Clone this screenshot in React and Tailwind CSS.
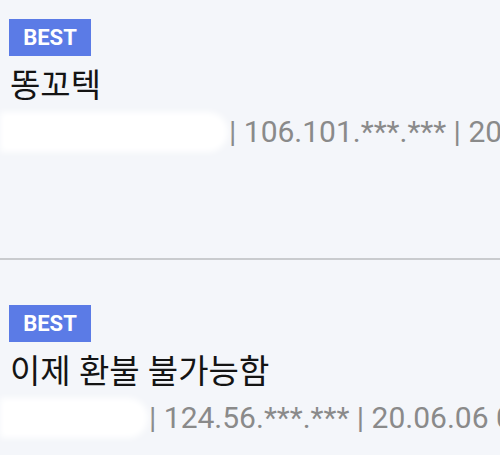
const posts = [
  { title: "똥꼬텍", blur: "w-[228px]", meta: "| 106.101.***.*** | 20.06.06 09:12", gap: "h-[104px]" },
  { title: "이제 환불 불가능함", blur: "w-[148px]", meta: "| 124.56.***.*** | 20.06.06 09:08", gap: "h-[60px]" },
];

const font = { fontFamily: "Roboto, 'Noto Sans CJK KR', sans-serif" };

export default function App() {
  return (
    <div className="w-[500px] h-[455px] overflow-hidden bg-[#f4f6fa]" style={font}>
      {posts.map((p, i) => (
        <div key={i} className={i === 0 ? "pt-[19px]" : "pt-[45px] border-t-2 border-[#c9cbce]"}>
          <div className="px-[9px]">
            <span className="inline-flex items-center justify-center w-[82px] h-[37px] bg-[#5b7be6] text-white text-[22px] font-bold leading-none">
              BEST
            </span>
          </div>
          <div className="px-[10px] mt-[8px] text-[33px] leading-[44px] text-[#141414] whitespace-nowrap">{p.title}</div>
          <div className="flex items-center mt-[2px] h-[44px] whitespace-nowrap">
            <div className={`${p.blur} h-[40px] shrink-0 bg-white blur-[3px] rounded-r-[20px]`} />
            <span className="ml-[1px] text-[30px] text-[#8a8a8a] leading-none">{p.meta}</span>
          </div>
          <div className={p.gap} />
        </div>
      ))}
    </div>
  );
}
